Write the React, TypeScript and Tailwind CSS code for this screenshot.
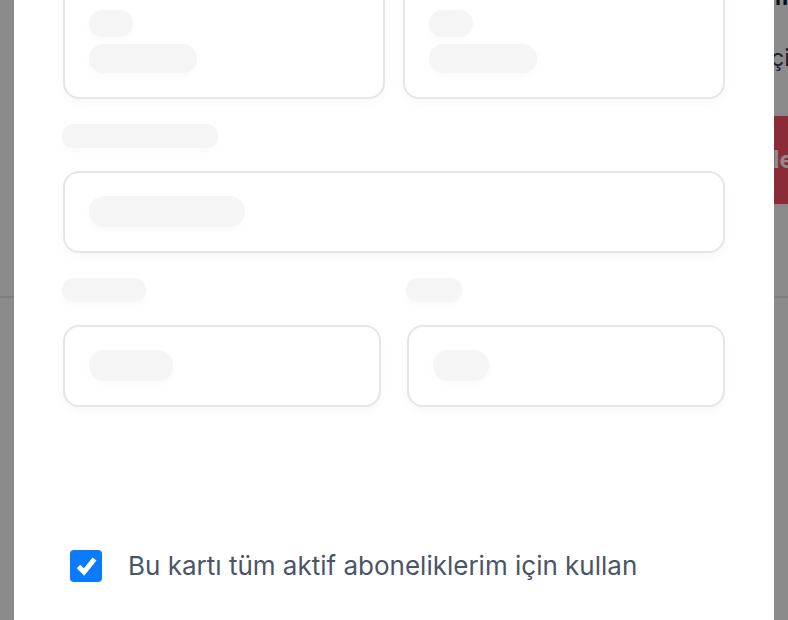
function Pill({ className }: { className: string }) {
  return <div className={`rounded-full bg-[#f5f5f5] shadow-[0_3px_8px_rgba(0,0,0,0.025)] ${className}`} />;
}

function Field({ pill, className = '' }: { pill: string; className?: string }) {
  return (
    <div className={`h-[82px] rounded-[16px] border-2 border-[#e6e6e6] bg-white pl-[24px] pt-[23px] shadow-[0_4px_10px_rgba(0,0,0,0.03)] ${className}`}>
      <Pill className={`h-[31px] ${pill}`} />
    </div>
  );
}

export default function App() {
  return (
    <div className="relative h-[620px] w-[788px] overflow-hidden bg-white font-['Inter',sans-serif]">
      {/* Page behind the dialog */}
      <div className="flex flex-col pl-[768px]">
        <div className="-mt-[15px] h-[24px] text-[22px] font-bold leading-[24px] text-[#111827]">mn</div>
        <div className="-ml-[4px] mt-[29px] h-[40px] text-[24px] leading-[40px] text-[#374151]">İçin</div>
        <div className="-ml-[68px] mt-[38px] flex h-[88px] w-[200px] items-center bg-[#ff4f66] text-[24px] font-bold text-white">
          <span className="inline-block w-[73px] overflow-hidden whitespace-nowrap text-right">Güncel</span>
          <span>le</span>
        </div>
        <div className="mt-[92px] h-[2px] w-full bg-[#e9eaec]" />
      </div>
      <div className="-mt-[2px] h-[2px] w-[14px] bg-[#e9eaec]" />

      {/* Backdrop */}
      <div className="absolute inset-0 bg-black/[0.455]" />

      {/* Dialog */}
      <div className="absolute inset-y-0 left-[14px] w-[760px] overflow-hidden bg-white">
        <div className="-mt-[17px] flex flex-col px-[48px]">
          {/* Top cards */}
          <div className="grid grid-cols-2 gap-[18px] px-[1px]">
            {[0, 1].map((i) => (
              <div
                key={i}
                className="flex h-[116px] flex-col gap-[7px] rounded-[16px] border-2 border-[#e6e6e6] bg-white pl-[24px] pt-[25px] shadow-[0_4px_10px_rgba(0,0,0,0.03)]"
              >
                <Pill className="h-[27px] w-[44px]" />
                <Pill className="h-[29px] w-[108px]" />
              </div>
            ))}
          </div>

          {/* Card number */}
          <Pill className="mt-[25px] h-[24px] w-[156px]" />
          <Field className="mx-[1px] mt-[23px]" pill="w-[156px]" />

          {/* Expiry / CVC */}
          <div className="mt-[25px] grid grid-cols-[319px_319px] gap-[25px]">
            <div className="flex flex-col">
              <Pill className="h-[24px] w-[84px]" />
              <Field className="ml-[1px] mt-[23px]" pill="w-[84px]" />
            </div>
            <div className="flex flex-col">
              <Pill className="h-[24px] w-[56px]" />
              <Field className="ml-[1px] mt-[23px]" pill="w-[56px]" />
            </div>
          </div>

          {/* Checkbox */}
          <label className="ml-[8px] mt-[143px] flex items-center gap-[26px]">
            <span className="flex h-[32px] w-[32px] shrink-0 items-center justify-center rounded-[4px] bg-[#0a7bff]">
              <svg viewBox="0 0 32 32" className="h-[32px] w-[32px]" fill="none">
                <path d="M8.5 16.5 L14 22 L24.5 9" stroke="white" strokeWidth={5} strokeLinejoin="miter" />
              </svg>
            </span>
            <span className="text-[26px] leading-[32px] text-[#4a5568]">
              Bu kartı tüm aktif aboneliklerim için kullan
            </span>
          </label>
        </div>
      </div>
    </div>
  );
}
